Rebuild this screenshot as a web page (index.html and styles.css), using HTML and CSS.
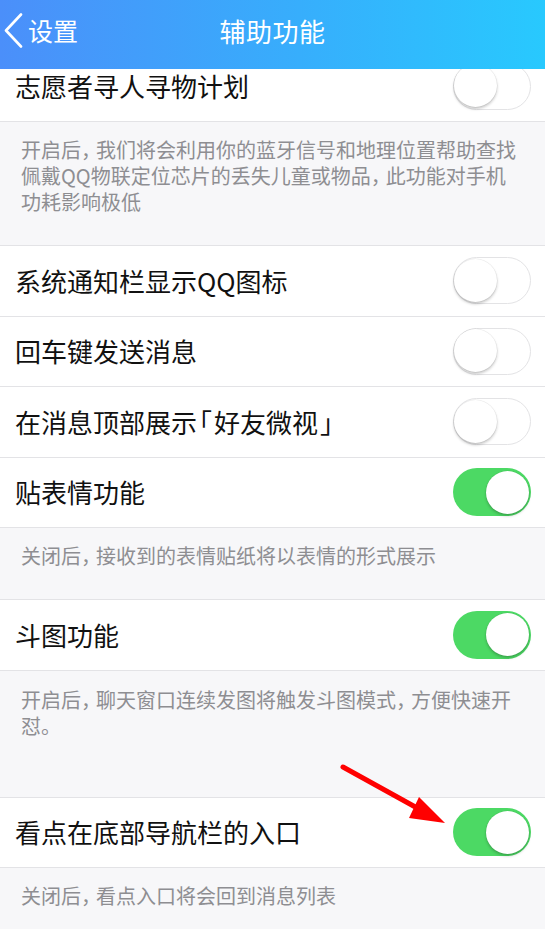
FILE: index.html
```html
<!DOCTYPE html>
<html lang="zh-CN">
<head>
<meta charset="utf-8">
<title>辅助功能</title>
<link rel="stylesheet" href="styles.css">
</head>
<body>
<header class="navbar">
  <div class="nav-back">
    <svg class="chevron" width="20" height="36" viewBox="0 0 20 36"><polyline points="17,1.5 2,17.5 17,33.5" fill="none" stroke="#fff" stroke-width="2.6" stroke-linecap="round" stroke-linejoin="round"/></svg>
    <span>设置</span>
  </div>
  <div class="nav-title">辅助功能</div>
  <div></div>
</header>
<main class="list">
  <div class="row first">
    <span class="label">志愿者寻人寻物计划</span>
    <span class="switch off"><span class="knob"></span></span>
  </div>
  <div class="desc d1">开启后<span class="cm">，</span>我们将会利用你的蓝牙信号和地理位置帮助查找<br>佩戴QQ物联定位芯片的丢失儿童或物品<span class="cm">，</span>此功能对手机<br>功耗影响极低</div>
  <div class="row">
    <span class="label">系统通知栏显示QQ图标</span>
    <span class="switch off"><span class="knob"></span></span>
  </div>
  <div class="row">
    <span class="label">回车键发送消息</span>
    <span class="switch off"><span class="knob"></span></span>
  </div>
  <div class="row">
    <span class="label">在消息顶部展示<span class="br">「</span>好友微视<span class="br">」</span></span>
    <span class="switch off"><span class="knob"></span></span>
  </div>
  <div class="row">
    <span class="label">贴表情功能</span>
    <span class="switch on"><span class="knob"></span></span>
  </div>
  <div class="desc d2">关闭后<span class="cm">，</span>接收到的表情贴纸将以表情的形式展示</div>
  <div class="row">
    <span class="label">斗图功能</span>
    <span class="switch on"><span class="knob"></span></span>
  </div>
  <div class="desc d3">开启后<span class="cm">，</span>聊天窗口连续发图将触发斗图模式<span class="cm">，</span>方便快速开<br>怼。</div>
  <div class="row">
    <span class="label">看点在底部导航栏的入口</span>
    <span class="switch on"><span class="knob"></span></span>
  </div>
  <div class="desc d4">关闭后<span class="cm">，</span>看点入口将会回到消息列表</div>
</main>
<svg class="arrow" width="120" height="75" viewBox="0 0 120 75">
  <line x1="5" y1="7" x2="90" y2="54" stroke="#ff0000" stroke-width="5" stroke-linecap="round"/>
  <polygon points="107,63 81,37 71,58" fill="#ff0000"/>
</svg>
</body>
</html>
```
FILE: styles.css
```css
* { box-sizing: border-box; }
html, body {
  margin: 0;
  padding: 0;
  background: #f7f7f9;
  font-family: "Noto Sans CJK SC", "Noto Sans", sans-serif;
  overflow: hidden;
}
body { position: relative; height: 929px; }
.navbar {
  position: relative;
  z-index: 2;
  height: 69px;
  padding-bottom: 8px;
  display: grid;
  grid-template-columns: 1fr auto 1fr;
  align-items: center;
  background: linear-gradient(to right, #4b8ffa 0%, #37aefc 55%, #28c9fe 100%);
  color: #fff;
}
.nav-back {
  display: flex;
  align-items: center;
  padding-left: 4px;
  font-size: 25px;
  line-height: 1;
}
.chevron { display: block; margin-right: 4px; }
.nav-title {
  font-size: 26px;
  line-height: 1;
  letter-spacing: 0.5px;
}
.list { position: relative; z-index: 1; margin-top: -17.5px; }
.row {
  height: 70.5px;
  display: flex;
  align-items: center;
  justify-content: space-between;
  padding: 0 14px 0 15px;
  background: #fff;
  border-bottom: 1px solid #e3e3e6;
}
.label {
  font-size: 26px;
  color: #111;
  line-height: 1;
}
.label .br {
  font-feature-settings: "halt";
  padding: 0 2px;
}
.desc {
  font-size: 20px;
  line-height: 26px;
  color: #8e8e92;
  padding: 15px 15px 30px 21px;
  border-bottom: 1px solid #e3e3e6;
  white-space: nowrap;
}
.desc .cm {
  font-feature-settings: "halt";
  margin-right: 5px;
}
.d3 { padding-top: 16px; padding-bottom: 58px; }
.d4 { border-bottom: none; }
.switch {
  position: relative;
  display: block;
  width: 78px;
  height: 47px;
  border-radius: 24px;
  flex: none;
}
.switch.off {
  background: #fff;
  border: 1.5px solid #e3e3e5;
}
.switch.on {
  background: #4cd964;
  height: 48px;
}
.knob {
  position: absolute;
  top: 1px;
  width: 43px;
  height: 43px;
  border-radius: 50%;
  background: #fff;
  box-shadow: 0 2px 3px rgba(0,0,0,0.22), 0 0 0 0.5px rgba(0,0,0,0.08);
}
.off .knob { left: 0; top: 0.5px; }
.on .knob { right: 2px; top: 2.5px; }
.arrow {
  position: absolute;
  left: 338px;
  top: 760px;
  z-index: 3;
}
```
